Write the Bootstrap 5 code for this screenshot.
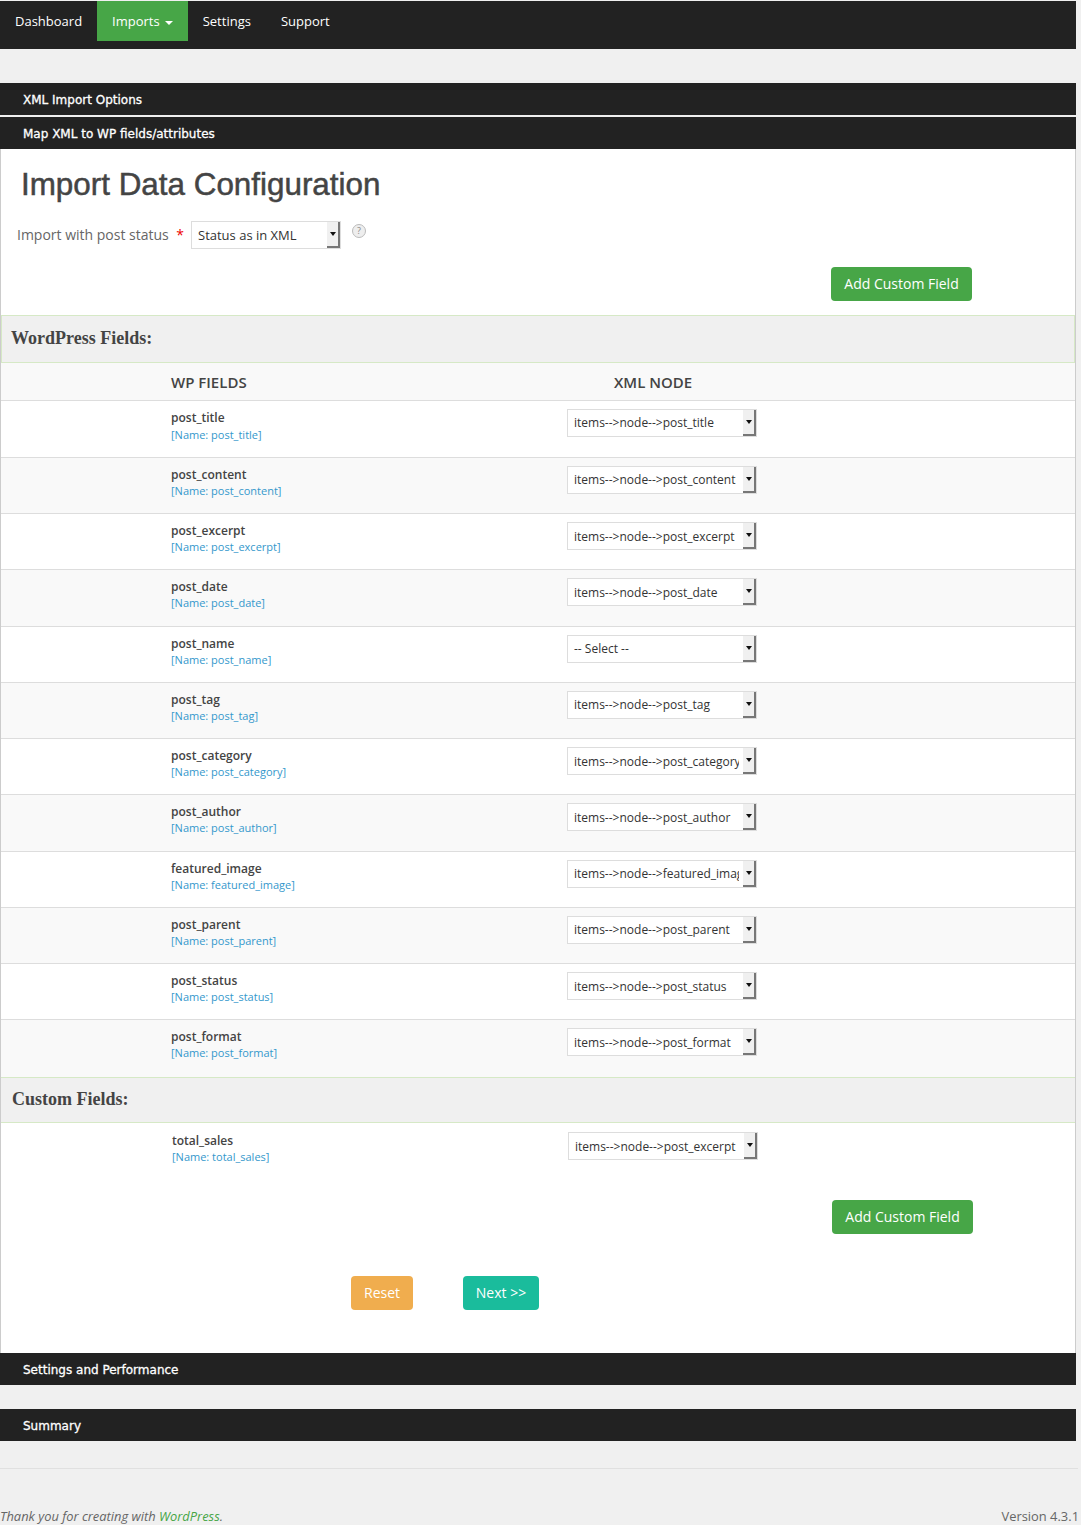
<!DOCTYPE html>
<html lang="en">
<head>
  <meta charset="UTF-8">
  <title>Import Data Configuration</title>
  <meta name="viewport" content="width=device-width, initial-scale=1">
  <link href="https://cdn.jsdelivr.net/npm/bootstrap@5.3.0/dist/css/bootstrap.min.css" rel="stylesheet">
  <style>
    html, body { height: 1525px; overflow: hidden; }
    body { background: #f0f0f0; font-family: "Open Sans", sans-serif; color: #444; }
    .page-wrap { width: 1076px; }

    .top-bar { background: #222; height: 48px; margin-top: 1px; padding: 0; align-items: flex-start; }
    .top-bar .navbar-nav .nav-link { color: #fff; font-size: 13px; font-weight: 500; height: 40px; line-height: 40px; padding: 0 15px; }
    .top-bar .navbar-nav .nav-link.active { background: #47a647; color: #fff; }
    .top-bar .dropdown-toggle::after { margin-left: 5px; vertical-align: 1px; border-top-width: 4px; border-left-width: 4px; border-right-width: 4px; }

    .step-bar { background: #222; color: #fff; height: 32px; line-height: 34px; padding-left: 23px; font-family: "DejaVu Sans", sans-serif; font-size: 12px; font-weight: 400; -webkit-text-stroke: .3px #fff; }
    .step-first { margin-top: 34px; }
    .step-second { margin-top: 2px; }

    .main-box { background: #fff; border-left: 1px solid #ccc; border-right: 1px solid #ccc; height: 1204px; }
    .main-title { font-family: "Liberation Sans", sans-serif; font-size: 31.4px; font-weight: 400; color: #444; -webkit-text-stroke: .5px #444; margin: 0; padding: 17px 0 0 20px; height: 54px; line-height: 37px; }
    .status-row { padding: 17px 0 0 16px; height: 46px; }
    .status-label { font-size: 14px; color: #666; width: 152px; }
    .req-star { color: #e00; width: 22px; text-align: center; font-size: 14px; }
    .help-dot { width: 14px; height: 14px; border-radius: 50%; border: 1px solid #bbb; background: #eee; color: #888; font-size: 9px; line-height: 12px; text-align: center; margin: -8px 0 0 11px; }

    .sel-wrap { position: relative; width: 190px; height: 28px; }
    .sel-wrap.sel-status { width: 150px; }
    .sel-box { appearance: none; -webkit-appearance: none; display: block; width: 100%; height: 100%; background: #fff; border: 1px solid #ddd; border-radius: 0; color: #333; font-family: "Open Sans", sans-serif; font-size: 12px; padding: 1px 17px 0 6px; outline: 0; }
    .sel-status .sel-box { font-size: 13px; padding-top: 2px; }
    .sel-btn { position: absolute; top: 1px; right: 1px; width: 13px; height: 26px; background: #f0f0f0; border-right: 2px solid #777; border-bottom: 2px solid #777; pointer-events: none; }
    .sel-btn::after { content: ""; position: absolute; left: 3px; top: 10px; border: 3px solid transparent; border-top: 4px solid #111; border-bottom: 0; }

    .add-row { height: 34px; margin-top: 2px; }
    .add-first { padding-right: 103px; margin-top: 18px; }
    .add-second { padding-right: 102px; }
    .btn-add, .btn-reset, .btn-next { height: 34px; color: #fff; font-size: 14px; font-weight: 500; border: 0; border-radius: 4px; padding: 0; line-height: 34px; }
    .btn-add { background: #47a647; width: 141px; }
    .btn-reset { background: #f0ad4e; width: 62px; }
    .btn-next { background: #1abc9c; width: 76px; }
    .btn-add:hover { background: #47a647; color: #fff; }
    .btn-reset:hover { background: #f0ad4e; color: #fff; }
    .btn-next:hover { background: #1abc9c; color: #fff; }

    .group-band { background: #f0f0f0; border-top: 1px solid #d6e9c6; border-bottom: 1px solid #d6e9c6; height: 48px; line-height: 45px; padding-left: 10px; font-family: "Liberation Serif", serif; font-weight: 700; font-size: 18px; color: #444; }
    .band-one { margin-top: 14px; padding-left: 9px; border-left: 1px solid #d6e9c6; border-right: 1px solid #d6e9c6; }
    .band-two { padding-left: 11px; height: 46.5px; line-height: 42px; }

    .head-row { background: #f9f9f9; height: 37.5px; line-height: 38px; border-bottom: 1px solid #ddd; font-size: 15px; font-weight: 600; color: #444; }
    .cell-name { width: 566px; padding-left: 170px; }
    .head-node { padding-left: 47px; }
    .field-row { height: 56.25px; border-bottom: 1px solid #ddd; padding-top: 8px; }
    .field-row.first-row { height: 57.25px; }
    .field-row.alt-row { background: #f9f9f9; }
    .field-row.last-row { border-bottom: 0; }
    .field-name { font-size: 12px; font-weight: 600; color: #444; line-height: 17px; }
    .field-attr { font-size: 11px; color: #3498cc; line-height: 16px; }
    .first-row .field-attr { line-height: 18px; }
    .custom-row { border-bottom: 0; height: 75px; padding-top: 9px; }
    .custom-row .cell-name { width: 567px; padding-left: 171px; }

    .actions-row { padding-left: 350px; margin-top: 42px; gap: 50px; }

    .step-gap { margin-top: 24px; }
    .foot-line { border-top: 1px solid #e0e0e0; margin: 27px 0 0; opacity: 1; width: 1078px; }
    .foot-text { width: 1081px; padding: 37px 2px 0 0; font-size: 12.9px; color: #666; line-height: 20px; }
    .foot-text a { color: #47a647; text-decoration: none; }
  </style>
</head>
<body>
<div class="page-wrap">

  <!-- top nav -->
  <nav class="navbar navbar-expand top-bar">
    <ul class="navbar-nav">
      <li class="nav-item"><a class="nav-link" href="#">Dashboard</a></li>
      <li class="nav-item"><a class="nav-link active dropdown-toggle" href="#">Imports</a></li>
      <li class="nav-item"><a class="nav-link" href="#">Settings</a></li>
      <li class="nav-item"><a class="nav-link" href="#">Support</a></li>
    </ul>
  </nav>

  <div class="step-bar step-first">XML Import Options</div>
  <div class="step-bar step-second">Map XML to WP fields/attributes</div>

  <div class="main-box">
    <h1 class="main-title">Import Data Configuration</h1>

    <div class="d-flex align-items-center status-row">
      <span class="status-label">Import with post status</span>
      <span class="req-star">*</span>
      <div class="sel-wrap sel-status">
        <select class="sel-box"><option>Status as in XML</option></select>
        <span class="sel-btn"></span>
      </div>
      <span class="help-dot">?</span>
    </div>

    <div class="d-flex justify-content-end add-row add-first">
      <button type="button" class="btn btn-add">Add Custom Field</button>
    </div>

    <div class="group-band band-one">WordPress Fields:</div>

    <div class="d-flex head-row">
      <div class="cell-name">WP FIELDS</div>
      <div class="head-node">XML NODE</div>
    </div>

    <div class="d-flex field-row first-row">
      <div class="cell-name"><div class="field-name">post_title</div><div class="field-attr">[Name: post_title]</div></div>
      <div class="sel-wrap"><select class="sel-box"><option>items--&gt;node--&gt;post_title</option></select><span class="sel-btn"></span></div>
    </div>
    <div class="d-flex field-row alt-row">
      <div class="cell-name"><div class="field-name">post_content</div><div class="field-attr">[Name: post_content]</div></div>
      <div class="sel-wrap"><select class="sel-box"><option>items--&gt;node--&gt;post_content</option></select><span class="sel-btn"></span></div>
    </div>
    <div class="d-flex field-row">
      <div class="cell-name"><div class="field-name">post_excerpt</div><div class="field-attr">[Name: post_excerpt]</div></div>
      <div class="sel-wrap"><select class="sel-box"><option>items--&gt;node--&gt;post_excerpt</option></select><span class="sel-btn"></span></div>
    </div>
    <div class="d-flex field-row alt-row">
      <div class="cell-name"><div class="field-name">post_date</div><div class="field-attr">[Name: post_date]</div></div>
      <div class="sel-wrap"><select class="sel-box"><option>items--&gt;node--&gt;post_date</option></select><span class="sel-btn"></span></div>
    </div>
    <div class="d-flex field-row">
      <div class="cell-name"><div class="field-name">post_name</div><div class="field-attr">[Name: post_name]</div></div>
      <div class="sel-wrap"><select class="sel-box"><option>-- Select --</option></select><span class="sel-btn"></span></div>
    </div>
    <div class="d-flex field-row alt-row">
      <div class="cell-name"><div class="field-name">post_tag</div><div class="field-attr">[Name: post_tag]</div></div>
      <div class="sel-wrap"><select class="sel-box"><option>items--&gt;node--&gt;post_tag</option></select><span class="sel-btn"></span></div>
    </div>
    <div class="d-flex field-row">
      <div class="cell-name"><div class="field-name">post_category</div><div class="field-attr">[Name: post_category]</div></div>
      <div class="sel-wrap"><select class="sel-box"><option>items--&gt;node--&gt;post_category</option></select><span class="sel-btn"></span></div>
    </div>
    <div class="d-flex field-row alt-row">
      <div class="cell-name"><div class="field-name">post_author</div><div class="field-attr">[Name: post_author]</div></div>
      <div class="sel-wrap"><select class="sel-box"><option>items--&gt;node--&gt;post_author</option></select><span class="sel-btn"></span></div>
    </div>
    <div class="d-flex field-row">
      <div class="cell-name"><div class="field-name">featured_image</div><div class="field-attr">[Name: featured_image]</div></div>
      <div class="sel-wrap"><select class="sel-box"><option>items--&gt;node--&gt;featured_image</option></select><span class="sel-btn"></span></div>
    </div>
    <div class="d-flex field-row alt-row">
      <div class="cell-name"><div class="field-name">post_parent</div><div class="field-attr">[Name: post_parent]</div></div>
      <div class="sel-wrap"><select class="sel-box"><option>items--&gt;node--&gt;post_parent</option></select><span class="sel-btn"></span></div>
    </div>
    <div class="d-flex field-row">
      <div class="cell-name"><div class="field-name">post_status</div><div class="field-attr">[Name: post_status]</div></div>
      <div class="sel-wrap"><select class="sel-box"><option>items--&gt;node--&gt;post_status</option></select><span class="sel-btn"></span></div>
    </div>
    <div class="d-flex field-row alt-row last-row">
      <div class="cell-name"><div class="field-name">post_format</div><div class="field-attr">[Name: post_format]</div></div>
      <div class="sel-wrap"><select class="sel-box"><option>items--&gt;node--&gt;post_format</option></select><span class="sel-btn"></span></div>
    </div>

    <div class="group-band band-two">Custom Fields:</div>

    <div class="d-flex field-row custom-row">
      <div class="cell-name"><div class="field-name">total_sales</div><div class="field-attr">[Name: total_sales]</div></div>
      <div class="sel-wrap"><select class="sel-box"><option>items--&gt;node--&gt;post_excerpt</option></select><span class="sel-btn"></span></div>
    </div>

    <div class="d-flex justify-content-end add-row add-second">
      <button type="button" class="btn btn-add">Add Custom Field</button>
    </div>

    <div class="d-flex actions-row">
      <button type="button" class="btn btn-reset">Reset</button>
      <button type="button" class="btn btn-next">Next &gt;&gt;</button>
    </div>
  </div>

  <div class="step-bar">Settings and Performance</div>
  <div class="step-bar step-gap">Summary</div>

  <hr class="foot-line">
  <div class="d-flex justify-content-between foot-text">
    <em>Thank you for creating with <a href="#">WordPress</a>.</em>
    <span>Version 4.3.1</span>
  </div>
</div>

<script src="https://cdn.jsdelivr.net/npm/bootstrap@5.3.0/dist/js/bootstrap.bundle.min.js"></script>
</body>
</html>
